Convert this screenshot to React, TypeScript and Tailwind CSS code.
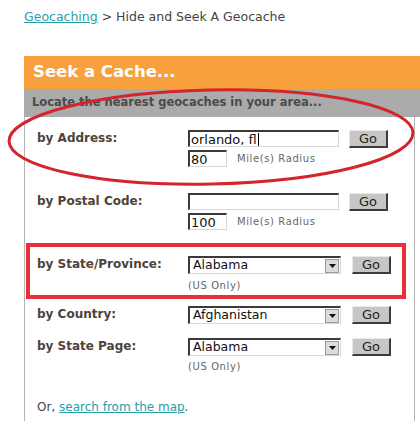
import { ReactNode } from 'react';

const labelCls = 'w-[151px] shrink-0 text-[12px] font-bold text-[#4d4339] leading-[17px]';
const insetCls =
  'bg-white border-t-2 border-l-2 border-b border-r border-t-[#3a3a3a] border-l-[#3a3a3a] border-b-[#d8d8d8] border-r-[#d8d8d8]';

function GoButton({ className = '' }: { className?: string }) {
  return (
    <button
      className={`w-[39px] h-[18px] bg-[#c6c6c6] border border-t-[#e8e8e8] border-l-[#e8e8e8] border-b-2 border-r-2 border-b-[#3c3c3c] border-r-[#3c3c3c] text-[13px] leading-none text-[#222] ${className}`}
    >
      Go
    </button>
  );
}

function Select({ value }: { value: string }) {
  return (
    <div className={`w-[153px] h-[18px] flex items-center justify-between ${insetCls}`}>
      <span className="pl-[3px] text-[12.5px] leading-none text-[#111]">{value}</span>
      <span className="w-[14px] h-[14px] mr-[1px] bg-[#dcdcdc] border border-[#9a9a9a] flex items-center justify-center">
        <svg width="7" height="4" viewBox="0 0 7 4">
          <path d="M0 0h7L3.5 4z" fill="#111" />
        </svg>
      </span>
    </div>
  );
}

function Row({ label, children, className = '' }: { label: string; children: ReactNode; className?: string }) {
  return (
    <div className={`flex ${className}`}>
      <div className={labelCls}>{label}</div>
      <div className="flex flex-col">{children}</div>
    </div>
  );
}

function RadiusLine({ value }: { value: string }) {
  return (
    <div className="flex items-center h-[17px] mt-[2px]">
      <div className={`w-[39px] h-[17px] flex items-center pl-[1px] text-[13px] leading-none text-[#111] ${insetCls}`}>
        {value}
      </div>
      <span className="ml-[10px] text-[10px] leading-[14px] tracking-[0.6px] text-[#666]">Mile(s) Radius</span>
    </div>
  );
}

function UsOnly({ className = '' }: { className?: string }) {
  return <span className={`text-[10px] leading-[14px] tracking-[0.6px] text-[#666] ${className}`}>(US Only)</span>;
}

export default function App() {
  return (
    <div className="relative w-[420px] h-[421px] overflow-hidden bg-white font-['DejaVu_Sans',Verdana,sans-serif]">
      {/* Breadcrumb */}
      <div className="pt-[9px] pl-[24px] text-[12.5px] leading-[16px] text-[#444]">
        <a className="text-[#2a9ea6] underline">Geocaching</a> &gt; Hide and Seek A Geocache
      </div>

      {/* Panel */}
      <div className="mt-[31px] ml-[24px]">
        <div className="h-[33px] bg-[#f7a03c] flex items-center pl-[9px] text-[16.5px] font-bold text-white">
          Seek a Cache...
        </div>
        <div className="h-[28px] bg-[#ababab] flex items-center pl-[8px] text-[11.5px] font-bold text-[#4a4a4a]">
          Locate the nearest geocaches in your area...
        </div>
        <div className="w-[391px] h-[320px] border-l border-r border-[#b4b4b4] pl-[12px] pt-[13px]">
          <Row label="by Address:">
            <div className="flex items-start h-[18px]">
              <div className={`w-[151px] h-[17px] flex items-center pl-[1px] text-[13px] leading-none text-[#111] ${insetCls}`}>
                orlando, fl<span className="inline-block w-px h-[13px] bg-black ml-[1px]" />
              </div>
              <GoButton className="ml-[10px]" />
            </div>
            <RadiusLine value="80" />
          </Row>

          <Row label="by Postal Code:" className="mt-[26px]">
            <div className="flex items-start h-[18px]">
              <div className={`w-[151px] h-[17px] ${insetCls}`} />
              <GoButton className="ml-[10px]" />
            </div>
            <RadiusLine value="100" />
          </Row>

          <Row label="by State/Province:" className="mt-[26px]">
            <div className="flex h-[18px]">
              <Select value="Alabama" />
              <GoButton className="ml-[11px]" />
            </div>
            <UsOnly className="mt-[5px]" />
          </Row>

          <Row label="by Country:" className="mt-[13px]">
            <div className="flex h-[18px]">
              <Select value="Afghanistan" />
              <GoButton className="ml-[11px]" />
            </div>
          </Row>

          <Row label="by State Page:" className="mt-[14px]">
            <div className="flex h-[18px]">
              <Select value="Alabama" />
              <GoButton className="ml-[11px]" />
            </div>
            <UsOnly className="mt-[4px]" />
          </Row>

          <p className="mt-[25px] text-[12px] leading-[16px] text-[#444]">
            Or, <a className="text-[#2a9ea6] underline">search from the map</a>.
          </p>
        </div>
      </div>

      {/* Red annotations */}
      <svg className="absolute inset-0 pointer-events-none" width="420" height="421">
        <ellipse cx="211" cy="137" rx="202" ry="47" transform="rotate(-1.2 211 137)" fill="none" stroke="#d4242c" strokeWidth="3" />
      </svg>
      <div className="absolute left-[26px] top-[243px] w-[380px] h-[56px] border-4 border-[#e8303a] pointer-events-none" />
    </div>
  );
}
